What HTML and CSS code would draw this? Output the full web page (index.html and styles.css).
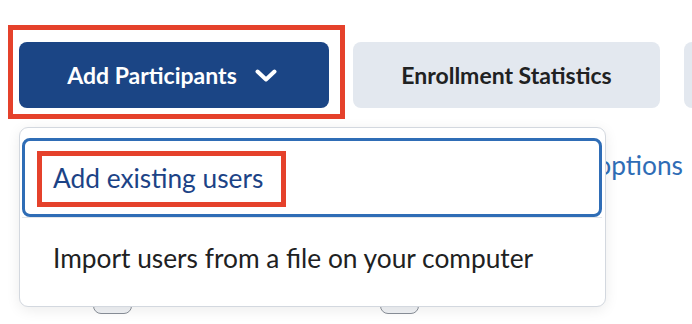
FILE: index.html
```html
<!DOCTYPE html>
<html lang="en">
<head>
<meta charset="utf-8">
<title>Add Participants</title>
<link rel="stylesheet" href="styles.css">
</head>
<body>
<div class="page">
  <div class="toolbar">
    <button class="btn btn-primary">
      <span>Add Participants</span>
      <svg class="chev" width="22" height="14" viewBox="0 0 22 14"><path d="M2.5 2.5 L11 10.5 L19.5 2.5" fill="none" stroke="#fff" stroke-width="4" stroke-linecap="round" stroke-linejoin="round"/></svg>
    </button>
    <button class="btn btn-secondary">Enrollment Statistics</button>
    <button class="btn btn-secondary btn-cut" aria-label="More"></button>
  </div>
  <div class="second-row">
    <a class="link-options">Search options</a>
  </div>
  <div class="under-row">
    <span class="chip"></span>
    <span class="chip"></span>
  </div>

  <div class="menu">
    <div class="menu-item focused">Add existing users</div>
    <div class="menu-item">Import users from a file on your computer</div>
  </div>

  <div class="mark mark-button"></div>
  <div class="mark mark-item"></div>
</div>
</body>
</html>
```

FILE: styles.css
```css
* { box-sizing: border-box; }
html, body { margin: 0; padding: 0; background: #fff; }
body { font-family: Lato, "Open Sans", sans-serif; width: 692px; height: 324px; overflow: hidden; }
.page { position: relative; width: 692px; height: 324px; overflow: hidden; }

.toolbar { display: flex; gap: 24px; padding: 42px 0 0 19px; }
.btn {
  font-family: Lato, sans-serif; font-weight: 700; font-size: 23px;
  height: 66px; border: 0; border-radius: 8px; flex: none;
  display: flex; align-items: center; justify-content: center;
}
.btn-primary { width: 310px; background: #1b4585; color: #fff; gap: 18px; padding: 0 4px 0 0; }
.chev { display: block; margin-top: 1px; }
.btn-secondary { width: 307px; background: #e3e8ef; color: #202122; }
.btn-cut { width: 120px; }

.second-row { display: flex; justify-content: flex-end; padding: 41px 9px 0 0; height: 73px; }
.link-options { font-size: 26.3px; color: #2f6db6; line-height: 32px; }

.under-row { display: flex; gap: 248px; padding: 110px 0 0 93px; }
.chip { display: block; height: 23px; width: 39px; border: 1px solid #8a9099; border-radius: 8px; background: #f1f3f6; }

.menu {
  position: absolute; left: 19px; top: 127px; width: 587px; height: 180px;
  background: #fff; border: 1px solid #d3d8df; border-radius: 9px;
  box-shadow: 0 3px 14px rgba(0,0,0,0.08);
  padding: 10px 3px 0 2px;
  display: flex; flex-direction: column;
}
.menu-item {
  height: 80px; display: flex; align-items: center; padding-left: 31px;
  font-size: 26.3px; color: #202122;
}
.menu-item + .menu-item { border-top: 1px solid #e3e6ea; height: 86px; padding-bottom: 6px; }
.menu-item.focused { border: 3px solid #2f6db6; border-radius: 8px; color: #1c4386; padding-left: 28px; height: 79px; }

.mark { position: absolute; border: 5px solid #e5412b; pointer-events: none; }
.mark-button { left: 8px; top: 25px; width: 337px; height: 94px; }
.mark-item { left: 37px; top: 151px; width: 249px; height: 56px; }
```
